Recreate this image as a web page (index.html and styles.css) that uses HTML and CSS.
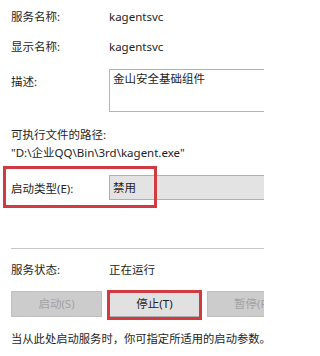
FILE: index.html
```html
<!DOCTYPE html>
<html lang="zh-CN">
<head>
<meta charset="utf-8">
<meta name="viewport" content="width=device-width, initial-scale=1">
<link rel="stylesheet" href="styles.css">
</head>
<body>
<div class="dialog">
  <div class="row line">
    <span class="label">服务名称:</span><span class="val">kagentsvc</span>
  </div>
  <div class="row line r2">
    <span class="label">显示名称:</span><span class="val">kagentsvc</span>
  </div>
  <div class="row desc">
    <span class="label desc-label">描述:</span>
    <div class="textarea">金山安全基础组件</div>
  </div>
  <div class="path-label">可执行文件的路径:</div>
  <div class="path">"D:\企业QQ\Bin\3rd\kagent.exe"</div>
  <div class="row startup">
    <span class="label">启动类型(E):</span>
    <div class="combo">禁用</div>
    <div class="mark mark-startup"></div>
  </div>
  <div class="sep"></div>
  <div class="row status">
    <span class="label">服务状态:</span><span class="val">正在运行</span>
  </div>
  <div class="buttons">
    <div class="btn disabled">启动(S)</div>
    <div class="btn-wrap">
      <div class="btn active">停止(T)</div>
      <div class="mark mark-stop"></div>
    </div>
    <div class="btn disabled">暂停(P)</div>
  </div>
  <p class="hint">当从此处启动服务时，你可指定所适用的启动参数。</p>
</div>
</body>
</html>
```

FILE: styles.css
```css
html, body {
  margin: 0;
  padding: 0;
  overflow: hidden;
  background: #ffffff;
  -webkit-text-size-adjust: none;
  text-size-adjust: none;
}
body {
  width: 264px;
  height: 356px;
  font-family: "Noto Sans", "Noto Sans CJK SC", sans-serif;
  font-size: 11.5px;
  color: #1e1e1e;
}
.dialog {
  width: 264px;
  height: 356px;
  overflow: hidden;
  padding: 5px 0 0 11px;
  box-sizing: border-box;
}
.row {
  display: flex;
  align-items: center;
}
.label {
  width: 98px;
  flex: none;
}
.line {
  height: 22px;
}
.r2 {
  margin-top: 8px;
}
.desc {
  margin-top: 12px;
  align-items: flex-start;
  margin-right: -30px;
}
.desc-label {
  margin-top: 4px;
}
.textarea {
  flex: 1;
  height: 43px;
  box-sizing: border-box;
  border: 1px solid #b4b4b4;
  padding: 1px 3px;
  line-height: 16px;
}
.path-label {
  margin-top: 14px;
  line-height: 18px;
}
.path {
  line-height: 18px;
  white-space: nowrap;
}
.startup {
  position: relative;
  margin-top: 13px;
  height: 25px;
  margin-right: -30px;
}
.combo {
  flex: 1;
  height: 25px;
  box-sizing: border-box;
  border: 1px solid #b0b0b0;
  background: #e3e3e3;
  padding-left: 3px;
  line-height: 23px;
}
.mark {
  position: absolute;
  border: 3px solid #d23a42;
  box-sizing: border-box;
}
.mark-startup {
  left: -8px;
  top: -9px;
  width: 154px;
  height: 42px;
}
.sep {
  margin-top: 48px;
  margin-right: -30px;
  height: 1px;
  background: #c8c8c8;
}
.status {
  margin-top: 11px;
  height: 18px;
}
.buttons {
  margin-top: 13px;
  display: flex;
  gap: 7px;
  margin-right: -60px;
}
.btn {
  width: 91px;
  height: 26px;
  box-sizing: border-box;
  text-align: center;
  line-height: 24px;
  border: 1px solid #bfbfbf;
  flex: none;
}
.btn.disabled {
  background: #cccccc;
  color: #a2a2a2;
}
.btn.active {
  background: #e1e1e1;
  border-color: #adadad;
  color: #1e1e1e;
}
.btn-wrap {
  position: relative;
  flex: none;
}
.mark-stop {
  left: -2px;
  top: -1px;
  right: -2px;
  bottom: -3px;
}
.hint {
  margin: 13px 0 0 0;
  line-height: 18px;
  white-space: nowrap;
  font-size: 11.3px;
}
```
